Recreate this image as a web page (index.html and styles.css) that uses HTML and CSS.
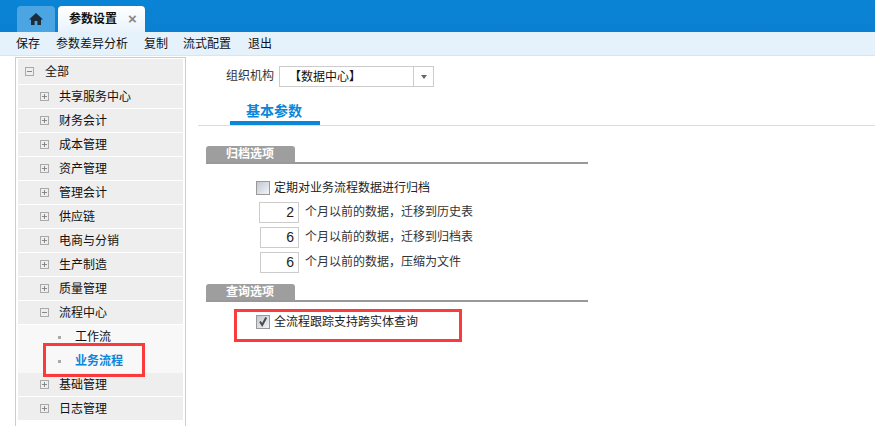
FILE: index.html
```html
<!DOCTYPE html>
<html lang="zh">
<head>
<meta charset="utf-8">
<title>参数设置</title>
<link rel="stylesheet" href="styles.css">
</head>
<body>
<header class="tabbar">
  <div class="tab tab-home">
    <svg class="home-icon" width="14" height="12" viewBox="0 0 14 12"><path d="M7 0 L14 6.4 H12 V12 H8.4 V8 H5.6 V12 H2 V6.4 H0 Z" fill="#1b2c3a"/></svg>
  </div>
  <div class="tab tab-active"><span class="tab-title">参数设置</span><span class="tab-close">×</span></div>
</header>
<nav class="toolbar">
  <span>保存</span><span>参数差异分析</span><span>复制</span><span class="tight">流式配置</span><span>退出</span>
</nav>
<div class="layout">
  <aside class="tree">
    <div class="row root"><i class="tg minus"></i><span>全部</span></div>
    <div class="row"><i class="tg plus"></i><span>共享服务中心</span></div>
    <div class="row"><i class="tg plus"></i><span>财务会计</span></div>
    <div class="row"><i class="tg plus"></i><span>成本管理</span></div>
    <div class="row"><i class="tg plus"></i><span>资产管理</span></div>
    <div class="row"><i class="tg plus"></i><span>管理会计</span></div>
    <div class="row"><i class="tg plus"></i><span>供应链</span></div>
    <div class="row"><i class="tg plus"></i><span>电商与分销</span></div>
    <div class="row"><i class="tg plus"></i><span>生产制造</span></div>
    <div class="row"><i class="tg plus"></i><span>质量管理</span></div>
    <div class="row"><i class="tg minus"></i><span>流程中心</span></div>
    <div class="leaf"><i class="dot"></i><span>工作流</span></div>
    <div class="leaf leaf-on"><i class="dot"></i><span>业务流程</span></div>
    <div class="row"><i class="tg plus"></i><span>基础管理</span></div>
    <div class="row"><i class="tg plus"></i><span>日志管理</span></div>
  </aside>
  <main class="content">
    <div class="org">
      <label>组织机构</label>
      <div class="select"><span class="select-val">【数据中心】</span><span class="select-btn"></span></div>
    </div>
    <div class="subtabs"><div class="subtab">基本参数</div></div>
    <section class="group">
      <div class="group-head"><span>归档选项</span></div>
      <div class="check-line first"><i class="cb"></i><span>定期对业务流程数据进行归档</span></div>
      <div class="num-line nudge"><span class="num">2</span><span class="num-text">个月以前的数据，迁移到历史表</span></div>
      <div class="num-line narrow"><span class="num">6</span><span class="num-text">个月以前的数据，迁移到归档表</span></div>
      <div class="num-line narrow"><span class="num">6</span><span class="num-text">个月以前的数据，压缩为文件</span></div>
    </section>
    <section class="group second">
      <div class="group-head"><span>查询选项</span></div>
      <div class="check-line last"><i class="cb">
        <svg width="12" height="12" viewBox="0 0 12 12"><path d="M3 5.5 L5.2 9 L9.2 1.5" fill="none" stroke="#4a4a4a" stroke-width="2"/></svg>
      </i><span>全流程跟踪支持跨实体查询</span></div>
    </section>
  </main>
</div>
<div class="mark mark-a"></div>
<div class="mark mark-b"></div>
</body>
</html>
```
FILE: styles.css
```css
* { box-sizing: border-box; }
html, body { margin: 0; height: 426px; overflow: hidden; }
body {
  position: relative;
  background: #fff;
  color: #222;
  font: 12px/16px "Liberation Sans", "Noto Sans CJK SC", sans-serif;
}
.tabbar {
  height: 32px;
  padding: 6px 0 0 17px;
  display: flex;
  gap: 3px;
  background: linear-gradient(#0a84d6, #0b80d2);
}
.tab { height: 26px; border-radius: 4px 4px 0 0; display: flex; align-items: center; }
.tab-home { width: 38px; justify-content: center; background: #4ba5e2; }
.tab-active { width: 87px; padding-left: 11px; background: linear-gradient(#fff, #e9f3fb); }
.tab-title { font-weight: 700; color: #111; width: 59px; }
.tab-close { color: #888; font-size: 15px; font-weight: 700; }
.toolbar {
  height: 24px;
  padding-left: 16px;
  display: flex;
  align-items: center;
  gap: 16px;
  background: #e6f2fb;
  border-bottom: 1px solid #d5e6f4;
  color: #111;
}
.tight { margin: 0 1px 0 -1px; }
.layout { display: flex; height: 370px; }
.tree {
  width: 171px;
  margin: 1px 0 0 15px;
  padding: 1px 2px 0;
  border: solid #ccc;
  border-width: 1px 1px 0;
  flex: none;
}
.row, .leaf { height: 24px; display: flex; align-items: center; color: #111; }
.row { background: #eee; border-bottom: 1px solid #fff; padding-left: 22px; }
.row.root { height: 26px; padding-left: 7px; }
.leaf { background: #f8f8f8; padding-left: 40px; }
.leaf-on { color: #0c86d8; font-weight: 700; }
.tg {
  position: relative;
  flex: none;
  width: 9px;
  height: 9px;
  margin-right: 10px;
  border: 1px solid #aaa;
}
.row.root .tg { margin-right: 11px; }
.tg::before {
  content: "";
  position: absolute;
  left: 1px;
  top: 3px;
  width: 5px;
  height: 1px;
  background: #888;
}
.tg.plus::after {
  content: "";
  position: absolute;
  left: 3px;
  top: 1px;
  width: 1px;
  height: 5px;
  background: #888;
}
.dot { width: 3px; height: 3px; margin-right: 14px; background: #aaa; flex: none; }
.content { flex: 1; padding: 10px 0 0 12px; min-width: 0; }
.org { display: flex; align-items: center; margin-left: 28px; height: 21px; color: #333; }
.org label { width: 53px; padding-bottom: 2px; }
.select {
  width: 155px;
  height: 21px;
  display: flex;
  border: 1px solid #ccc;
  background: #fff;
}
.select-val { flex: 1; padding: 1px 0 0 9px; line-height: 19px; color: #111; }
.select-btn { width: 20px; border-left: 1px solid #ccc; position: relative; }
.select-btn::after {
  content: "";
  position: absolute;
  left: 7px;
  top: 8px;
  border: 3px solid transparent;
  border-top: 4px solid #666;
  border-bottom: 0;
}
.subtabs { margin: 12px 0 0; height: 27px; border-bottom: 1px solid #ddd; }
.subtab {
  width: 90px;
  height: 26px;
  margin-left: 32px;
  padding: 2px 0 0 16px;
  border-bottom: 4px solid #0c86d8;
  color: #0c86d8;
  font-size: 14px;
  font-weight: 700;
  line-height: 20px;
}
.group { margin: 20px 0 0 8px; width: 382px; }
.group.second { margin-top: 11px; }
.group-head { height: 18px; border-bottom: 2px solid #999; }
.group-head span {
  display: block;
  width: 89px;
  height: 16px;
  padding-left: 20px;
  background: #9e9e9e;
  border-radius: 3px 3px 0 0;
  color: #fff;
  font-weight: 700;
  line-height: 16px;
}
.check-line { display: flex; align-items: center; padding-left: 50px; color: #222; height: 16px; }
.check-line.first { margin-top: 16px; }
.check-line.last { margin-top: 12px; }
.cb {
  flex: none;
  width: 14px;
  height: 14px;
  margin-right: 4px;
  border: 1px solid #999;
  background: linear-gradient(135deg, #c2c8d2, #f2f4f7);
  display: flex;
  align-items: center;
  justify-content: center;
}
.cb svg { flex: none; }
.num-line { display: flex; align-items: center; height: 21px; margin: 4px 0 0 53px; gap: 6px; color: #333; }
.num-line.nudge { margin-top: 6px; }
.num-line.narrow { padding-left: 1px; }
.narrow .num { width: 39px; }
.num {
  width: 40px;
  height: 21px;
  padding-right: 4px;
  border: 1px solid #ccc;
  text-align: right;
  font-size: 14px;
  line-height: 19px;
  color: #222;
}
.num-text { padding-bottom: 2px; }
.mark { position: absolute; border: 3px solid #fb3b3b; }
.mark-a { left: 43px; top: 343px; width: 102px; height: 34px; }
.mark-b { left: 234px; top: 309px; width: 228px; height: 33px; }
```
